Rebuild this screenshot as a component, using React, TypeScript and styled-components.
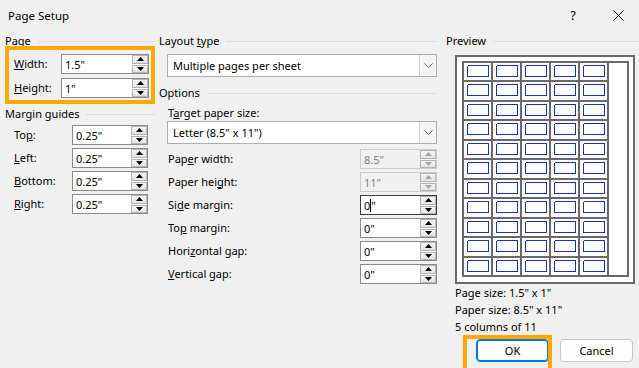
import React from "react";
import styled, { createGlobalStyle } from "styled-components";

const GlobalStyle = createGlobalStyle`
  html, body {
    margin: 0;
    padding: 0;
    background: #f0f0f0;
  }
  body {
    font-family: "Segoe UI", "Noto Sans", sans-serif;
    font-size: 11px;
    color: #000;
  }
`;

const Dialog = styled.div`
  width: 639px;
  height: 368px;
  overflow: hidden;
  background: #f0f0f0;
  display: flex;
  flex-direction: column;
`;

const TitleBar = styled.div`
  height: 30px;
  display: flex;
  align-items: center;
  padding-left: 8px;
  flex-shrink: 0;
`;

const Title = styled.div`
  flex: 1;
  font-size: 11.5px;
`;

const TitleButton = styled.div`
  width: 42px;
  height: 30px;
  display: flex;
  align-items: center;
  justify-content: center;
  font-size: 13px;
  & + & {
    margin-left: 3px;
  }
`;

const Body = styled.div`
  display: flex;
  padding: 5px 0 0 5px;
`;

const Column = styled.div<{ $width: number; $gap?: number }>`
  width: ${(p) => p.$width}px;
  margin-left: ${(p) => p.$gap ?? 0}px;
  display: flex;
  flex-direction: column;
  flex-shrink: 0;
`;

const GroupHeader = styled.div<{ $top?: number }>`
  height: 12px;
  line-height: 12px;
  margin-top: ${(p) => p.$top ?? 0}px;
  display: flex;
  align-items: center;
  white-space: nowrap;
  &::after {
    content: "";
    flex: 1;
    height: 1px;
    background: #dcdcdc;
    margin-left: 7px;
    margin-top: 1px;
  }
`;

const Highlight = styled.div`
  border: 4px solid #ffa800;
  margin-top: -1px;
  padding: 4px 2px 2px 5px;
  display: flex;
  flex-direction: column;
  gap: 4px;
`;

const FieldRow = styled.div<{ $indent?: number; $label: number }>`
  display: flex;
  align-items: center;
  height: 20px;
  padding-left: ${(p) => p.$indent ?? 0}px;
  & > label {
    width: ${(p) => p.$label}px;
    flex-shrink: 0;
    padding-bottom: 2px;
  }
`;

const FieldList = styled.div<{ $top: number; $gap: number }>`
  display: flex;
  flex-direction: column;
  gap: ${(p) => p.$gap}px;
  margin-top: ${(p) => p.$top}px;
`;

const InputBox = styled.div<{ $width: number; $disabled?: boolean; $focused?: boolean }>`
  width: ${(p) => p.$width}px;
  height: 20px;
  box-sizing: border-box;
  border: 1px solid
    ${(p) => (p.$focused ? "#3c3c3c" : p.$disabled ? "#cccccc" : "#8a8a8a")};
  background: ${(p) => (p.$disabled ? "#f0f0f0" : "#fff")};
  color: ${(p) => (p.$disabled ? "#838383" : "#000")};
  display: flex;
  align-items: center;
  padding-left: 3px;
`;

const InputText = styled.span`
  flex: 1;
  line-height: 18px;
  display: flex;
  align-items: center;
  padding-top: 1px;
`;

const Caret = styled.span`
  display: inline-block;
  width: 1px;
  height: 13px;
  background: #000;
`;

const Spinner = styled.div`
  width: 16px;
  height: 18px;
  display: flex;
  flex-direction: column;
  gap: 1px;
`;

const SpinButton = styled.div<{ $disabled?: boolean }>`
  flex: 1;
  box-sizing: border-box;
  border: 1px solid #b4b4b4;
  background: linear-gradient(#f4f4f4, #e4e4e4);
  display: flex;
  align-items: center;
  justify-content: center;
  svg {
    fill: ${(p) => (p.$disabled ? "#a6a6a6" : "#000")};
  }
`;

const SelectBox = styled.div<{ $top: number }>`
  margin: ${(p) => p.$top}px 0 0 8px;
  width: 270px;
  height: 23px;
  box-sizing: border-box;
  border: 1px solid #adadad;
  background: #fff;
  display: flex;
  align-items: center;
`;

const SelectText = styled.span`
  flex: 1;
  padding-left: 5px;
  padding-bottom: 1px;
`;

const SelectArrow = styled.div`
  width: 17px;
  height: 21px;
  box-sizing: border-box;
  border-left: 1px solid #cfcfcf;
  background: #f3f3f3;
  display: flex;
  align-items: center;
  justify-content: center;
`;

const SubLabel = styled.div`
  margin: 7px 0 0 9px;
  height: 14px;
  line-height: 14px;
`;

const OptionRow = styled.div`
  display: flex;
  align-items: center;
  justify-content: space-between;
  height: 20px;
  padding-left: 9px;
  & > label {
    padding-bottom: 2px;
  }
`;

const PreviewFrame = styled.div`
  margin: 8px 0 0 9px;
  width: 180px;
  height: 229px;
  box-sizing: border-box;
  border: 2px solid #696969;
  background: #fff;
  padding: 4px 4px 5px 5px;
`;

const PaperSheet = styled.div`
  width: 167px;
  height: 216px;
  box-sizing: border-box;
  border: 2px solid #696969;
  display: grid;
  grid-template-columns: repeat(5, 29px);
  grid-template-rows: 19px 20px 19px 20px 19px 20px 19px 20px 19px 20px 17px;
`;

const LabelCell = styled.div<{ $last: boolean }>`
  border-right: 2px solid #696969;
  border-bottom: ${(p) => (p.$last ? "none" : "2px solid #696969")};
  padding: 2px 0 0 3px;
  line-height: 0;
`;

const InfoText = styled.div`
  margin-left: 9px;
  line-height: 17px;
  height: 17px;
  white-space: nowrap;
`;

const ButtonRow = styled.div`
  display: flex;
  gap: 11px;
  margin: 4px 0 0 30px;
`;

const Button = styled.div<{ $primary?: boolean }>`
  width: 73px;
  height: 23px;
  box-sizing: border-box;
  border: 1px solid ${(p) => (p.$primary ? "#0078d4" : "#c6c6c6")};
  box-shadow: ${(p) => (p.$primary ? "inset 0 0 0 1px #0078d4" : "none")};
  border-radius: 4px;
  background: #fdfdfd;
  display: flex;
  align-items: center;
  justify-content: center;
  padding-bottom: 1px;
  position: relative;
`;

const FocusRing = styled.div`
  position: absolute;
  left: -14px;
  top: -5px;
  width: 89px;
  height: 40px;
  box-sizing: border-box;
  border: 4px solid #ffa800;
  pointer-events: none;
`;

const UpTri = () => (
  <svg width="7" height="4" viewBox="0 0 7 4">
    <polygon points="0,4 7,4 3.5,0" />
  </svg>
);

const DownTri = () => (
  <svg width="7" height="4" viewBox="0 0 7 4">
    <polygon points="0,0 7,0 3.5,4" />
  </svg>
);

const Chevron = () => (
  <svg width="9" height="5" viewBox="0 0 9 5">
    <polyline points="0.5,0.5 4.5,4.5 8.5,0.5" fill="none" stroke="#606060" strokeWidth="1" />
  </svg>
);

const CloseIcon = () => (
  <svg width="11" height="11" viewBox="0 0 11 11">
    <path d="M0.5 0.5 L10.5 10.5 M10.5 0.5 L0.5 10.5" stroke="#000" strokeWidth="1" />
  </svg>
);

// dotted margin outline of one label in the preview
const LabelMargin = () => (
  <svg width="22" height="12" viewBox="0 0 22 12" shapeRendering="crispEdges">
    <rect x="0.5" y="0.5" width="21" height="11" fill="none" stroke="#0a3cff" strokeDasharray="1 1" />
    <rect
      x="0.5"
      y="0.5"
      width="21"
      height="11"
      fill="none"
      stroke="#1a2a90"
      strokeDasharray="1 1"
      strokeDashoffset="1"
    />
  </svg>
);

interface SpinInputProps {
  value: React.ReactNode;
  width: number;
  disabled?: boolean;
  focused?: boolean;
}

const SpinInput: React.FC<SpinInputProps> = ({ value, width, disabled, focused }) => (
  <InputBox $width={width} $disabled={disabled} $focused={focused}>
    <InputText>{value}</InputText>
    <Spinner>
      <SpinButton $disabled={disabled}>
        <UpTri />
      </SpinButton>
      <SpinButton $disabled={disabled}>
        <DownTri />
      </SpinButton>
    </Spinner>
  </InputBox>
);

const margins: [React.ReactNode, string][] = [
  [<>To<u>p</u>:</>, '0.25"'],
  [<><u>L</u>eft:</>, '0.25"'],
  [<><u>B</u>ottom:</>, '0.25"'],
  [<><u>R</u>ight:</>, '0.25"'],
];

const ROWS = 11;
const COLS = 5;

export default function App() {
  const cells = [];
  for (let r = 0; r < ROWS; r++) {
    for (let c = 0; c < COLS; c++) {
      cells.push(
        <LabelCell key={`${r}-${c}`} $last={r === ROWS - 1}>
          <LabelMargin />
        </LabelCell>
      );
    }
  }

  return (
    <>
      <GlobalStyle />
      <Dialog>
        <TitleBar>
          <Title>Page Setup</Title>
          <TitleButton>?</TitleButton>
          <TitleButton>
            <CloseIcon />
          </TitleButton>
        </TitleBar>
        <Body>
          <Column $width={150}>
            <GroupHeader>Page</GroupHeader>
            <Highlight>
              <FieldRow $label={47}>
                <label>
                  <u>W</u>idth:
                </label>
                <SpinInput value={'1.5"'} width={88} />
              </FieldRow>
              <FieldRow $label={47}>
                <label>
                  <u>H</u>eight:
                </label>
                <SpinInput value={'1"'} width={88} />
              </FieldRow>
            </Highlight>
            <GroupHeader $top={4}>Margin guides</GroupHeader>
            <FieldList $top={5} $gap={3}>
              {margins.map(([label, v], i) => (
                <FieldRow key={i} $indent={9} $label={58}>
                  <label>{label}</label>
                  <SpinInput value={v} width={76} />
                </FieldRow>
              ))}
            </FieldList>
          </Column>

          <Column $width={278} $gap={4}>
            <GroupHeader>
              Layout&nbsp;<u>t</u>ype
            </GroupHeader>
            <SelectBox $top={7}>
              <SelectText>Multiple pages per sheet</SelectText>
              <SelectArrow>
                <Chevron />
              </SelectArrow>
            </SelectBox>
            <GroupHeader $top={10}>Options</GroupHeader>
            <SubLabel>
              T<u>a</u>rget paper size:
            </SubLabel>
            <SelectBox $top={1}>
              <SelectText>Letter (8.5" x 11")</SelectText>
              <SelectArrow>
                <Chevron />
              </SelectArrow>
            </SelectBox>
            <FieldList $top={5} $gap={3}>
              <OptionRow>
                <label>
                  Pap<u>e</u>r width:
                </label>
                <SpinInput value={'8.5"'} width={77} disabled />
              </OptionRow>
              <OptionRow>
                <label>
                  Paper hei<u>g</u>ht:
                </label>
                <SpinInput value={'11"'} width={77} disabled />
              </OptionRow>
              <OptionRow>
                <label>
                  Si<u>d</u>e margin:
                </label>
                <SpinInput
                  value={
                    <>
                      0<Caret />"
                    </>
                  }
                  width={77}
                  focused
                />
              </OptionRow>
              <OptionRow>
                <label>
                  To<u>p</u> margin:
                </label>
                <SpinInput value={'0"'} width={77} />
              </OptionRow>
              <OptionRow>
                <label>
                  Hori<u>z</u>ontal gap:
                </label>
                <SpinInput value={'0"'} width={77} />
              </OptionRow>
              <OptionRow>
                <label>
                  <u>V</u>ertical gap:
                </label>
                <SpinInput value={'0"'} width={77} />
              </OptionRow>
            </FieldList>
          </Column>

          <Column $width={193} $gap={9}>
            <GroupHeader>Preview</GroupHeader>
            <PreviewFrame>
              <PaperSheet>{cells}</PaperSheet>
            </PreviewFrame>
            <InfoText>Page size: 1.5" x 1"</InfoText>
            <InfoText>Paper size: 8.5" x 11"</InfoText>
            <InfoText>5 columns of 11</InfoText>
            <ButtonRow>
              <Button $primary>
                OK
                <FocusRing />
              </Button>
              <Button>Cancel</Button>
            </ButtonRow>
          </Column>
        </Body>
      </Dialog>
    </>
  );
}
